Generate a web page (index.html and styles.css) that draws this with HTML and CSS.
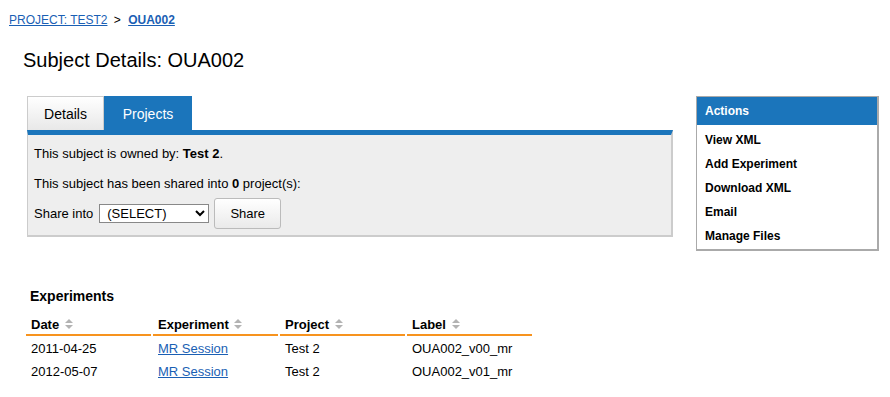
FILE: index.html
```html
<!doctype html>
<html lang="en">
<head>
	<meta charset="UTF-8"/>
	<title>Subject Details</title>
	<link rel="stylesheet" href="styles.css">
</head>
<body>
	<div class="crumbs">
		<a href="#">PROJECT: TEST2</a>
		<span class="sep">&gt;</span>
		<a href="#" class="cur">OUA002</a>
	</div>
	<h1 class="title">Subject Details: OUA002</h1>

	<div class="main">
		<div class="left">
			<ul class="tab">
				<li><a href="#" class="t1">Details</a></li>
				<li><a href="#" class="t2 active">Projects</a></li>
			</ul>
			<div class="tabCon">
				<p>This subject is owned by: <b>Test 2</b>.</p>
				<p>This subject has been shared into <b>0</b> project(s):</p>
				<div class="shareRow">
					<span>Share into</span>
					<select class="sel"><option>(SELECT)</option></select>
					<button class="btn">Share</button>
				</div>
			</div>
		</div>

		<div class="actions">
			<div class="actHead">Actions</div>
			<ul class="actList">
				<li><a href="#">View XML</a></li>
				<li><a href="#">Add Experiment</a></li>
				<li><a href="#">Download XML</a></li>
				<li><a href="#">Email</a></li>
				<li><a href="#">Manage Files</a></li>
			</ul>
		</div>
	</div>

	<div class="exp">
		<h3>Experiments</h3>
		<table class="list">
			<thead>
				<tr>
					<th>Date <i class="sort"></i></th>
					<th>Experiment <i class="sort"></i></th>
					<th>Project <i class="sort"></i></th>
					<th>Label <i class="sort"></i></th>
				</tr>
			</thead>
			<tbody>
				<tr>
					<td>2011-04-25</td>
					<td><a href="#">MR Session</a></td>
					<td>Test 2</td>
					<td>OUA002_v00_mr</td>
				</tr>
				<tr>
					<td>2012-05-07</td>
					<td><a href="#">MR Session</a></td>
					<td>Test 2</td>
					<td>OUA002_v01_mr</td>
				</tr>
			</tbody>
		</table>
	</div>
</body>
</html>
```

FILE: styles.css
```css
*				{ padding:0; margin:0; box-sizing:border-box; }
body			{ font-family:"Liberation Sans", Arial, sans-serif; font-size:12px; color:#000; background:#fff; }
ul				{ list-style-type:none; }
a				{ color:#1a5fb4; }

.crumbs			{ padding:13px 9px 0; height:27px; line-height:14px; }
.crumbs .sep	{ margin:0 4px 0 3px; }
.crumbs .cur	{ font-weight:bold; }

.title			{ font-size:20px; font-weight:normal; line-height:24px; padding:21px 23px 0; height:69px; }

.main			{ display:flex; gap:23px; padding-left:27px; }
.left			{ width:646px; }
.tab			{ display:flex; height:34px; }
.tab li a		{ display:block; height:34px; line-height:34px; text-align:center; font-size:14px; color:#000; text-decoration:none; border:1px solid #ccc; border-bottom:0; background:linear-gradient(#fff, #e8e8e8); }
.tab li a.t1	{ width:77px; }
.tab li a.t2	{ width:88px; }
.tab li a.active	{ background:#1b75bb; color:#fff; border-color:#1b75bb; }
.tabCon			{ border-top:5px solid #1b75bb; background:#eee; border-left:1px solid #ccc; border-right:2px solid #ccc; border-bottom:2px solid #ccc; height:107px; padding:11px 6px 0; font-size:13px; }
.tabCon p		{ line-height:15px; margin-bottom:15px; }
.shareRow		{ display:flex; align-items:center; margin-top:-8px; }
.sel			{ width:110px; height:19px; margin:0 5px 0 6px; font-family:inherit; font-size:13px; border:1px solid #888; background:#fff; padding-left:3px; }
.btn			{ width:67px; height:31px; font-family:inherit; font-size:13px; border:1px solid #bbb; border-radius:3px; background:linear-gradient(#fff, #eaeaea); }

.actions		{ width:183px; height:155px; border:2px solid #aaa; border-width:1px 2px 2px 1px; }
.actHead		{ background:#1b75bb; color:#fff; font-weight:bold; height:28px; line-height:28px; padding-left:8px; }
.actList		{ padding-top:3px; }
.actList li		{ height:24px; line-height:24px; padding-left:8px; }
.actList li a	{ color:#000; font-weight:bold; text-decoration:none; }

.exp			{ padding:36px 0 0 24px; }
.exp h3			{ font-size:14px; line-height:18px; padding-left:6px; margin-bottom:7px; }
.list			{ border-spacing:2px; font-size:13px; }
.list th		{ width:125px; text-align:left; line-height:18px; padding:2px 5px 0; border-bottom:2px solid #f7931e; }
.list td		{ line-height:15px; padding:3px 5px 3px; }
.sort			{ display:inline-block; width:9px; height:11px; vertical-align:-1px; margin-left:2px; position:relative; }
.sort:before	{ content:""; position:absolute; left:0; top:0; border:4.5px solid transparent; border-top:0; border-bottom:4.5px solid #b3b3b3; }
.sort:after		{ content:""; position:absolute; left:0; top:6px; border:4.5px solid transparent; border-bottom:0; border-top:4.5px solid #b3b3b3; }
```
